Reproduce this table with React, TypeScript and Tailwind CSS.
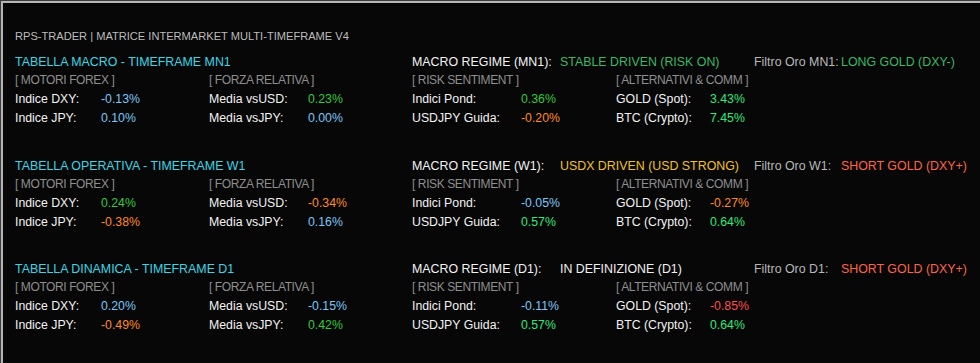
// MT4-style intermarket matrix panel: three timeframe tables on a dark chart background

type Tone = 'blue' | 'lime' | 'spring' | 'orange' | 'red';

const toneClass: Record<Tone, string> = {
  blue: 'text-[#7cc6f6]',
  lime: 'text-[#34c83c]',
  spring: 'text-[#2ee87a]',
  orange: 'text-[#ff8a1e]',
  red: 'text-[#ff4c4c]',
};

type Cell = { v: string; t: Tone };

type Section = {
  title: string;
  regimeLabel: string;
  regime: string;
  regimeClass: string;
  filterLabel: string;
  filter: string;
  filterClass: string;
  dxy: Cell;
  jpy: Cell;
  vsUsd: Cell;
  vsJpy: Cell;
  pond: Cell;
  guida: Cell;
  gold: Cell;
  btc: Cell;
};

const sections: Section[] = [
  {
    title: 'TABELLA MACRO - TIMEFRAME MN1',
    regimeLabel: 'MACRO REGIME (MN1):',
    regime: 'STABLE DRIVEN (RISK ON)',
    regimeClass: 'text-[#38b868]',
    filterLabel: 'Filtro Oro MN1:',
    filter: 'LONG GOLD (DXY-)',
    filterClass: 'text-[#38b868]',
    dxy: { v: '-0.13%', t: 'blue' },
    jpy: { v: '0.10%', t: 'blue' },
    vsUsd: { v: '0.23%', t: 'lime' },
    vsJpy: { v: '0.00%', t: 'blue' },
    pond: { v: '0.36%', t: 'lime' },
    guida: { v: '-0.20%', t: 'orange' },
    gold: { v: '3.43%', t: 'spring' },
    btc: { v: '7.45%', t: 'spring' },
  },
  {
    title: 'TABELLA OPERATIVA - TIMEFRAME W1',
    regimeLabel: 'MACRO REGIME (W1):',
    regime: 'USDX DRIVEN (USD STRONG)',
    regimeClass: 'text-[#f2c21c]',
    filterLabel: 'Filtro Oro W1:',
    filter: 'SHORT GOLD (DXY+)',
    filterClass: 'text-[#ff6347]',
    dxy: { v: '0.24%', t: 'lime' },
    jpy: { v: '-0.38%', t: 'orange' },
    vsUsd: { v: '-0.34%', t: 'orange' },
    vsJpy: { v: '0.16%', t: 'blue' },
    pond: { v: '-0.05%', t: 'blue' },
    guida: { v: '0.57%', t: 'spring' },
    gold: { v: '-0.27%', t: 'orange' },
    btc: { v: '0.64%', t: 'spring' },
  },
  {
    title: 'TABELLA DINAMICA - TIMEFRAME D1',
    regimeLabel: 'MACRO REGIME (D1):',
    regime: 'IN DEFINIZIONE (D1)',
    regimeClass: 'text-[#f0f0f0]',
    filterLabel: 'Filtro Oro D1:',
    filter: 'SHORT GOLD (DXY+)',
    filterClass: 'text-[#ff6347]',
    dxy: { v: '0.20%', t: 'blue' },
    jpy: { v: '-0.49%', t: 'orange' },
    vsUsd: { v: '-0.15%', t: 'blue' },
    vsJpy: { v: '0.42%', t: 'lime' },
    pond: { v: '-0.11%', t: 'blue' },
    guida: { v: '0.57%', t: 'spring' },
    gold: { v: '-0.85%', t: 'red' },
    btc: { v: '0.64%', t: 'spring' },
  },
];

function Bracket({ children }: { children: string }) {
  return (
    <div className="h-[19px] leading-[19px] text-[12px] tracking-[-0.4px] text-[#8e8e8e] whitespace-nowrap">
      {children}
    </div>
  );
}

function Label({ children }: { children: string }) {
  return <div className="h-[19px] leading-[19px] text-[#f2f2f2] whitespace-nowrap">{children}</div>;
}

function Value({ cell }: { cell: Cell }) {
  return <div className={`h-[19px] leading-[19px] whitespace-nowrap ${toneClass[cell.t]}`}>{cell.v}</div>;
}

function Table({ s }: { s: Section }) {
  return (
    <div className="flex">
      {/* left half: forex engines + relative strength */}
      <div className="w-[397px] shrink-0">
        <div className="h-[18px] leading-[18px] text-[12.4px] text-[#3ad6e6] whitespace-nowrap">{s.title}</div>
        <div className="grid grid-cols-[86px_108px_99px_1fr]">
          <div className="col-span-2">
            <Bracket>[ MOTORI FOREX ]</Bracket>
          </div>
          <div className="col-span-2">
            <Bracket>[ FORZA RELATIVA ]</Bracket>
          </div>
          <Label>Indice DXY:</Label>
          <Value cell={s.dxy} />
          <Label>Media vsUSD:</Label>
          <Value cell={s.vsUsd} />
          <Label>Indice JPY:</Label>
          <Value cell={s.jpy} />
          <Label>Media vsJPY:</Label>
          <Value cell={s.vsJpy} />
        </div>
      </div>

      {/* right half: regime, gold filter, risk + alternatives */}
      <div className="flex-1">
        <div className="flex h-[18px] leading-[18px] text-[12.4px] whitespace-nowrap">
          <div className="w-[148px] text-[#f2f2f2]">{s.regimeLabel}</div>
          <div className={`w-[194px] ${s.regimeClass}`}>{s.regime}</div>
          <div className="w-[87px] text-[#b8b8b8]">{s.filterLabel}</div>
          <div className={s.filterClass}>{s.filter}</div>
        </div>
        <div className="grid grid-cols-[109px_95px_94px_1fr]">
          <div className="col-span-2">
            <Bracket>[ RISK SENTIMENT ]</Bracket>
          </div>
          <div className="col-span-2">
            <Bracket>[ ALTERNATIVI &amp; COMM ]</Bracket>
          </div>
          <Label>Indici Pond:</Label>
          <Value cell={s.pond} />
          <Label>GOLD (Spot):</Label>
          <Value cell={s.gold} />
          <Label>USDJPY Guida:</Label>
          <Value cell={s.guida} />
          <Label>BTC (Crypto):</Label>
          <Value cell={s.btc} />
        </div>
      </div>
    </div>
  );
}

export default function App() {
  return (
    <div
      className="w-[980px] h-[363px] overflow-hidden bg-[#050505] border-t border-l border-[#3c3c3c] text-[12.3px]"
      style={{ fontFamily: '"Liberation Sans", Arial, sans-serif' }}
    >
      <div className="h-full border-t-2 border-l-2 border-[#b4b4b4] bg-[#070707] pl-[12px]">
        <div className="pt-[25px] h-[50px] leading-[16px] text-[11.1px] text-[#bcbcbc] whitespace-nowrap">
          RPS-TRADER | MATRICE INTERMARKET MULTI-TIMEFRAME V4
        </div>
        <div className="flex flex-col gap-[28.5px]">
          {sections.map((s) => (
            <Table key={s.title} s={s} />
          ))}
        </div>
      </div>
    </div>
  );
}
